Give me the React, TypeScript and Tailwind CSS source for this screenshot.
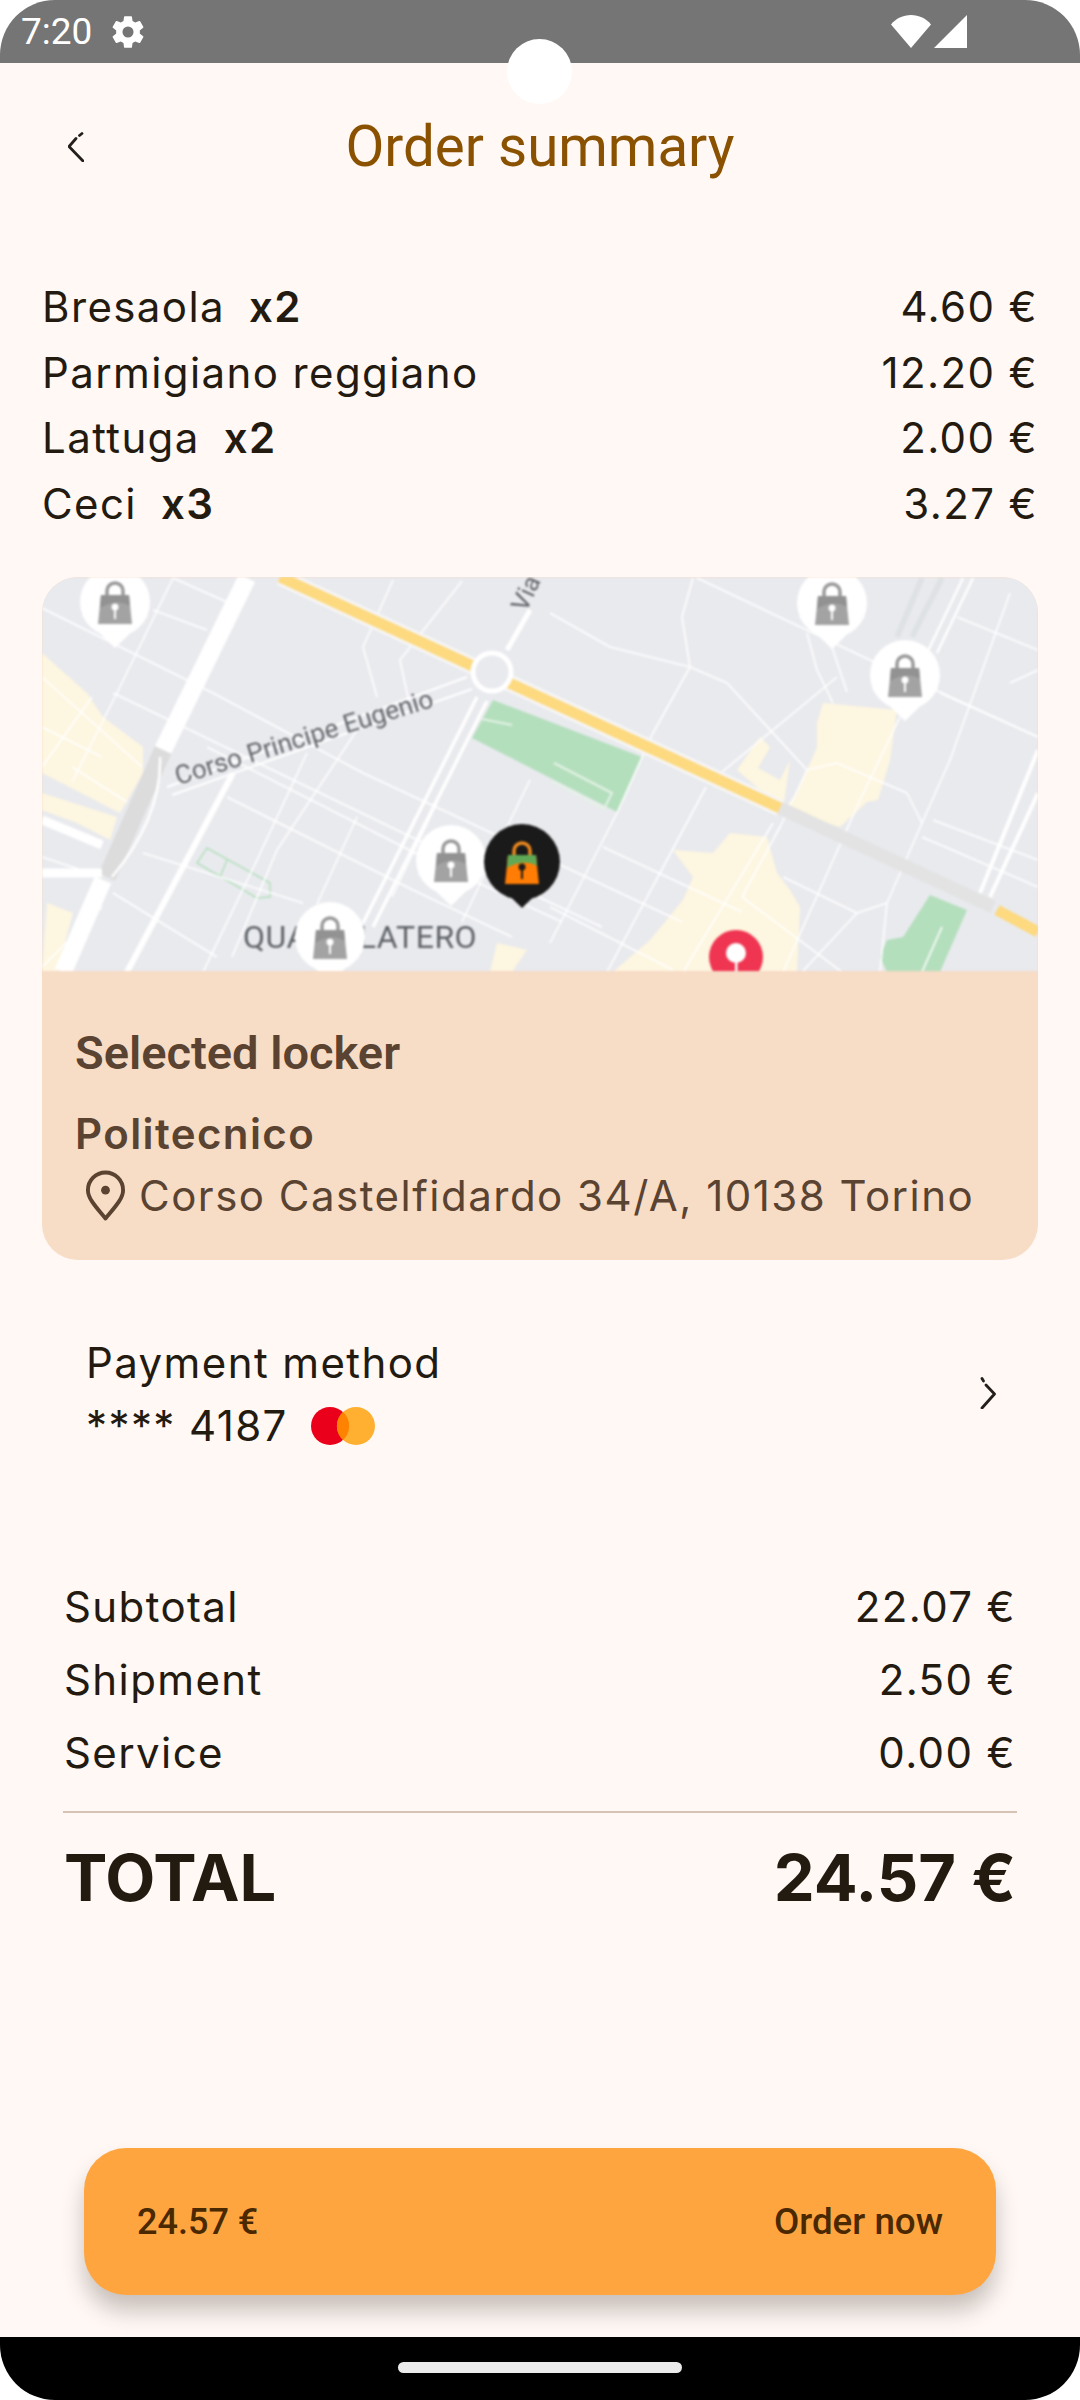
import React from 'react'

const roads: number[][] = [
  [131,1,185,25],[0,31,171,116],[171,116,321,196],[321,196,508,283],[508,283,640,345],
  [111,33,165,53],[71,116,148,153],[148,153,361,256],[361,256,560,350],[165,170,381,280],[381,280,520,345],
  [185,220,371,313],[371,313,470,360],[101,276,261,326],[71,316,175,380],[131,1,75,116],[75,116,30,205],
  [351,3,321,70],[321,70,335,120],[358,83,368,130],[420,4,358,83],[265,176,215,283],[215,283,161,395],
  [315,153,235,273],[235,273,190,380],[315,240,275,327],[488,203,465,250],[465,250,420,345],
  [651,1,640,40],[640,40,648,90],[648,90,611,156],[611,156,575,236],[575,236,508,366],[508,36,568,70],[568,70,648,90],
  [648,90,685,106],[685,106,765,193],[765,193,738,250],[738,250,700,320],[655,1,828,83],[765,56,775,93],[775,93,791,126],
  [765,193,795,186],[795,186,865,216],[865,216,880,246],[880,246,845,326],[845,326,815,336],[815,336,760,395],
  [898,116,996,160],[915,40,996,73],[968,16,908,183],[908,183,880,246],[996,93,968,106],[891,243,996,283],
  [858,140,818,223],[818,223,741,395],[731,246,641,395],[664,210,565,395],[508,330,631,393],[561,270,700,335],
  [741,300,815,336],[0,150,60,180],[0,280,60,300],[828,83,996,160],[790,70,805,115],[680,195,795,100],
  [845,326,838,395],[700,320,800,395],[880,260,996,310],[900,350,880,395],[0,390,60,330],[395,226,350,320],
  [0,100,100,190],[0,190,50,120],[30,190,85,225],
]

const yellows = [
  '0,76 45,116 61,140 101,170 101,196 78,236 0,196',
  '0,216 75,240 68,263 35,246 0,233',
  '5,326 31,336 15,395 0,395',
  '455,366 485,373 470,395 448,395',
  '781,126 855,133 848,183 836,223 825,225 798,250 741,233 755,216 775,170 775,146',
  '718,160 728,170 716,191 738,203 748,183 741,233 695,193',
  '688,256 725,260 735,296 748,313 758,330 755,395 571,395 608,363 641,323 651,300 631,273 671,276',
]

function Lock({ x, y, dark }: { x: number; y: number; dark?: boolean }) {
  return (
    <g transform={`translate(${x} ${y})`}>
      <path d="M-8 -7V-11A8 8 0 0 1 8 -11V-7" fill="none" stroke={dark ? '#f08a1d' : '#999999'} strokeWidth="3.5" />
      <path d="M-14 -7H14L17 22H-17Z" fill={dark ? '#ff7d05' : '#a3a3a3'} />
      <path d="M-14 -7H14L15 4C6 -2 -6 0 -15 6Z" fill={dark ? '#5fa956' : '#929292'} />
      <circle cx="0" cy="5" r="3.5" fill={dark ? '#1a1a1a' : '#ffffff'} />
      <rect x="-1" y="6" width="2" height="11" fill={dark ? '#1a1a1a' : '#ffffff'} />
    </g>
  )
}

function Pin({ x, y, dark }: { x: number; y: number; dark?: boolean }) {
  return (
    <g>
      <path d={`M${x - 33} ${y + 14}L${x} ${y + 46}L${x + 33} ${y + 14}Z`} fill={dark ? '#1a1a1a' : '#ffffff'} />
      <circle cx={x} cy={y} r={dark ? 38 : 35} fill={dark ? '#1a1a1a' : '#ffffff'} />
      <Lock x={x} y={y} dark={dark} />
    </g>
  )
}

function MapView() {
  return (
    <svg viewBox="0 0 996 394" className="block h-[394px] w-full blur-[0.8px]" style={{ fontFamily: 'Roboto, sans-serif' }}>
      <rect width="996" height="394" fill="#e9eaee" />
      {yellows.map((p) => (
        <polygon key={p} points={p} fill="#fdf6e0" />
      ))}
      <polygon points="451,123 600,180 575,235 430,161" fill="#b4dfbd" />
      <polygon points="888,318 925,333 898,395 845,395 838,380 845,363 861,360" fill="#b4dfbd" />
      <path d="M470 148L440 142M512 186L570 216L562 232L510 204" fill="none" stroke="#e5f3e6" strokeWidth="2" />
      <path d="M155 286L165 271L228 306L228 320L215 321ZM185 283L178 300" fill="none" stroke="#b4dfbd" strokeWidth="1.5" />
      <path d="M880 1L855 60M900 1L870 60" fill="none" stroke="#dfe2e4" strokeWidth="6" />
      {roads.map((r, i) => (
        <line key={i} x1={r[0]} y1={r[1]} x2={r[2]} y2={r[3]} stroke="#ffffff" strokeWidth="1.6" />
      ))}
      <path d="M921 1L885 76M931 1L895 76" stroke="#ffffff" strokeWidth="2.5" fill="none" />
      <path d="M996 173L938 316M996 216L948 320" stroke="#ffffff" strokeWidth="4" fill="none" />
      <path d="M205 1L121 173" stroke="#ffffff" strokeWidth="18" fill="none" />
      <path d="M121 173L65 300" stroke="#dcdcdc" strokeWidth="18" fill="none" />
      <path d="M61 303L21 395" stroke="#ffffff" strokeWidth="18" fill="none" />
      <path d="M0 243L60 268M0 296H60" stroke="#ffffff" strokeWidth="9" fill="none" />
      <path d="M118 180Q120 240 70 300" stroke="#ffffff" strokeWidth="2.5" fill="none" />
      <path d="M191 196L85 395" stroke="#ffffff" strokeWidth="6" fill="none" />
      <path d="M425 100L125 210M430 112L130 218" stroke="#ffffff" strokeWidth="2" fill="none" />
      <path d="M435 120L321 346M445 124L331 350" stroke="#ffffff" strokeWidth="3.5" fill="none" />
      <path d="M465 73L488 33" stroke="#ffffff" strokeWidth="5" fill="none" />
      <path d="M238 0L738 231" stroke="#f6f6f6" strokeWidth="17" fill="none" />
      <path d="M738 231L951 330" stroke="#e3e3e3" strokeWidth="13" fill="none" />
      <path d="M238 0L738 231M955 333L996 355" stroke="#fdd97f" strokeWidth="11" fill="none" />
      <circle cx="450" cy="95" r="19" fill="#e9eaee" stroke="#ffffff" strokeWidth="5" />
      <text x="0" y="0" transform="translate(136 208) rotate(-17)" fontSize="26" fill="#63666b">
        Corso Principe Eugenio
      </text>
      <text x="0" y="0" transform="translate(484 36) rotate(-65)" fontSize="25" fill="#63666b">
        Via
      </text>
      <text x="201" y="371" fontSize="32" letterSpacing="0.5" fill="#5f6368">
        QUADRILATERO
      </text>
      <Pin x={73} y={25} />
      <Pin x={409} y={283} />
      <Pin x={288} y={360} />
      <Pin x={790} y={26} />
      <Pin x={863} y={98} />
      <Pin x={480} y={285} dark />
      <circle cx="694" cy="380" r="27" fill="#ef3551" />
      <circle cx="694" cy="376" r="10" fill="#ffffff" />
      <rect x="693" y="380" width="2.5" height="16" fill="#ffffff" />
    </svg>
  )
}

function Row({ left, qty, right }: { left: string; qty?: string; right: string }) {
  return (
    <div className="flex h-[65.5px] items-center justify-between">
      <span className="flex gap-[24px]">
        <span>{left}</span>
        {qty && <span className="font-semibold">{qty}</span>}
      </span>
      <span>{right}</span>
    </div>
  )
}

function SummaryRow({ left, right }: { left: string; right: string }) {
  return (
    <div className="flex h-[73px] items-center justify-between">
      <span>{left}</span>
      <span>{right}</span>
    </div>
  )
}

export default function App() {
  const inter = { fontFamily: 'Inter, sans-serif' }
  const roboto = { fontFamily: 'Roboto, sans-serif' }
  return (
    <div className="relative flex h-[2400px] w-[1080px] flex-col overflow-hidden bg-white" style={inter}>
      <div className="flex h-[63px] shrink-0 items-center justify-between rounded-t-[55px] bg-[#757575] pl-[21px] pr-[113px] text-white">
        <div className="flex items-center gap-[17px]">
          <span className="text-[37px] leading-none" style={roboto}>7:20</span>
          <svg viewBox="0 0 24 24" className="h-[38px] w-[38px]" fill="#ffffff">
            <path d="M19.43 12.98c.04-.32.07-.64.07-.98s-.03-.66-.07-.98l2.11-1.65a.5.5 0 0 0 .12-.64l-2-3.46a.5.5 0 0 0-.61-.22l-2.49 1a7.3 7.3 0 0 0-1.69-.98l-.38-2.65A.49.49 0 0 0 14 2h-4a.49.49 0 0 0-.49.42l-.38 2.65c-.61.25-1.17.59-1.69.98l-2.49-1a.49.49 0 0 0-.61.22l-2 3.46a.49.49 0 0 0 .12.64l2.11 1.65c-.04.32-.07.65-.07.98s.03.66.07.98l-2.11 1.65a.5.5 0 0 0-.12.64l2 3.46c.12.22.39.3.61.22l2.49-1c.52.4 1.08.73 1.69.98l.38 2.65c.03.24.24.42.49.42h4c.25 0 .46-.18.49-.42l.38-2.65c.61-.25 1.17-.59 1.69-.98l2.49 1c.23.09.49 0 .61-.22l2-3.46a.5.5 0 0 0-.12-.64l-2.11-1.65zM12 15.5a3.5 3.5 0 1 1 0-7 3.5 3.5 0 0 1 0 7z" />
          </svg>
        </div>
        <div className="flex items-end gap-[3px]">
          <svg viewBox="0 0 40 33" className="h-[33px] w-[40px]" fill="#ffffff">
            <path d="M20 33L0 9.5C5 3.5 12 0 20 0s15 3.5 20 9.5Z" />
          </svg>
          <svg viewBox="0 0 33 33" className="h-[33px] w-[33px]" fill="#ffffff">
            <path d="M33 0V33H0Z" />
          </svg>
        </div>
      </div>
      <div className="absolute left-[507px] top-[39px] h-[65px] w-[65px] rounded-full bg-white" />

      <div className="flex flex-1 flex-col bg-[#fff8f5] px-[42px] text-[#231a10]">
        <div className="relative flex h-[166px] shrink-0 items-center justify-center pt-[2px]">
          <svg viewBox="0 0 16 30" className="absolute left-[26px] top-[69px] h-[30px] w-[16px]" fill="none" stroke="#231f1c" strokeWidth="2.8" strokeLinecap="round" strokeLinejoin="round">
            <path d="M14 1.5L11.5 3.5M8 6.5L1 14.5L15 29" />
          </svg>
          <h1 className="text-[56.5px] font-normal leading-none text-[#8a5100]" style={roboto}>Order summary</h1>
        </div>

        <div className="mt-[45px] text-[42px] tracking-[1.4px]">
          <Row left="Bresaola" qty="x2" right="4.60 €" />
          <Row left="Parmigiano reggiano" right="12.20 €" />
          <Row left="Lattuga" qty="x2" right="2.00 €" />
          <Row left="Ceci" qty="x3" right="3.27 €" />
        </div>

        <div className="mt-[41px] overflow-hidden rounded-[36px] bg-[#f7dcc6]">
          <MapView />
          <div className="flex h-[289px] flex-col px-[33px] pt-[58px] text-[#5a4331]">
            <div className="text-[47px] font-semibold leading-[48px]" style={roboto}>Selected locker</div>
            <div className="mt-[33px] text-[42px] font-semibold leading-[48px] tracking-[1.4px]">Politecnico</div>
            <div className="mt-[12px] flex items-center gap-[13px] pl-[10px] text-[42px] leading-[48px] tracking-[1.5px]">
              <svg viewBox="0 0 42 52" className="h-[52px] w-[41px] shrink-0" fill="none" stroke="#5a4331" strokeWidth="4">
                <path d="M21 49C12 38 3 29 3 20a18 18 0 0 1 36 0c0 9-9 18-18 29Z" strokeLinejoin="round" />
                <circle cx="21" cy="20" r="4.5" fill="#5a4331" stroke="none" />
              </svg>
              <span>Corso Castelfidardo 34/A, 10138 Torino</span>
            </div>
          </div>
        </div>

        <div className="mt-[42px] flex h-[182px] shrink-0 items-center justify-between rounded-[36px] bg-[#fff8f4] pl-[44px] pr-[42px] text-[42px] tracking-[1.4px]">
          <div className="flex flex-col pt-[2px]">
            <span className="leading-[63px]">Payment method</span>
            <span className="flex items-center gap-[23px] leading-[63px]">
              <span>**** 4187</span>
              <svg viewBox="0 0 64 38" className="h-[38px] w-[64px]">
                <circle cx="19" cy="19" r="19" fill="#eb001b" />
                <circle cx="45" cy="19" r="19" fill="#ffb031" />
                <path d="M32 5a19 19 0 0 1 0 28a19 19 0 0 1 0-28Z" fill="#ff8200" />
              </svg>
            </span>
          </div>
          <svg viewBox="0 0 16 32" className="h-[32px] w-[16px]" fill="none" stroke="#231f1c" strokeWidth="2.8" strokeLinecap="round" strokeLinejoin="round">
            <path d="M2 1.5L3.5 4M6 8L14.5 17L2 31" />
          </svg>
        </div>

        <div className="mx-[22px] mt-[86px] text-[42px] tracking-[1.4px]">
          <SummaryRow left="Subtotal" right="22.07 €" />
          <SummaryRow left="Shipment" right="2.50 €" />
          <SummaryRow left="Service" right="0.00 €" />
        </div>
        <div className="mx-[21px] mt-[22px] h-[2px] bg-[#d6c3b4]" />
        <div className="mx-[22px] mt-[25px] flex h-[80px] items-center justify-between text-[65px] font-bold">
          <span>TOTAL</span>
          <span>24.57 €</span>
        </div>

        <div className="mx-[42px] mb-[42px] mt-auto flex h-[147px] shrink-0 items-center justify-between rounded-[42px] bg-[#ffa540] px-[53px] text-[36.75px] font-medium text-[#4a2800] shadow-[0_16px_22px_rgba(60,50,40,0.28)]" style={roboto}>
          <span className="text-[36px]">24.57 €</span>
          <span>Order now</span>
        </div>
      </div>

      <div className="flex h-[63px] shrink-0 items-center justify-center rounded-b-[55px] bg-black pb-[2px]">
        <div className="h-[11px] w-[284px] rounded-full bg-[#ebebeb]" />
      </div>
    </div>
  )
}
